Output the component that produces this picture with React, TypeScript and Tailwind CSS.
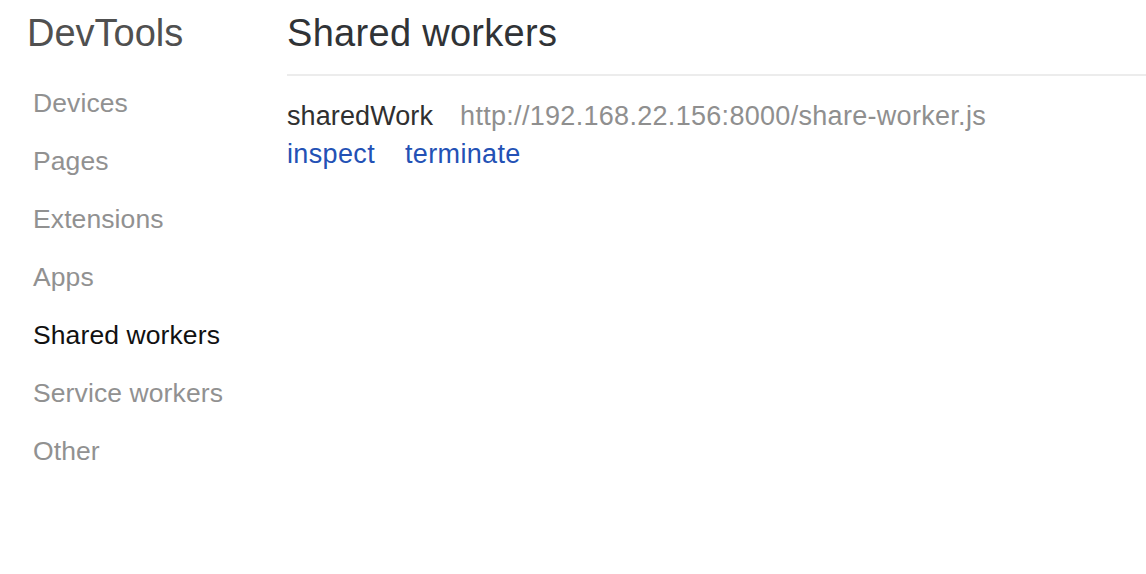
const navItems = [
  "Devices",
  "Pages",
  "Extensions",
  "Apps",
  "Shared workers",
  "Service workers",
  "Other",
];

export default function App() {
  return (
    <div
      className="flex h-[574px] w-[1146px] overflow-hidden bg-white"
      style={{ fontFamily: '"Liberation Sans", Arial, sans-serif' }}
    >
      {/* sidebar */}
      <div className="w-[287px] shrink-0">
        <h1 className="pl-[27px] pt-[9px] text-[38px] leading-[48px] tracking-[0px] text-[#505050]">
          DevTools
        </h1>
        <ul className="mt-[29px] pl-[33px]">
          {navItems.map((item) => (
            <li
              key={item}
              className={
                item === "Shared workers"
                  ? "h-[58px] text-[26.5px] leading-[34px] tracking-[0.1px] text-[#111]"
                  : "h-[58px] text-[26.5px] leading-[34px] tracking-[0.1px] text-[#919191]"
              }
            >
              {item}
            </li>
          ))}
        </ul>
      </div>

      {/* content */}
      <div className="flex-1">
        <h2 className="pt-[9px] text-[38px] leading-[48px] tracking-[0.3px] text-[#303336]">
          Shared workers
        </h2>
        <div className="mt-[17px] h-[2px] bg-[#ececec]" />
        <div className="pt-[21px]">
          <div className="flex gap-[27px] text-[27px] leading-[38px] tracking-[0.1px]">
            <span className="text-[#303030]">sharedWork</span>
            <span className="tracking-[0.3px] text-[#8f8f8f]">
              http://192.168.22.156:8000/share-worker.js
            </span>
          </div>
          <div className="flex gap-[30px] text-[27px] leading-[38px] tracking-[0.35px] text-[#2351b5]">
            <span>inspect</span>
            <span>terminate</span>
          </div>
        </div>
      </div>
    </div>
  );
}
